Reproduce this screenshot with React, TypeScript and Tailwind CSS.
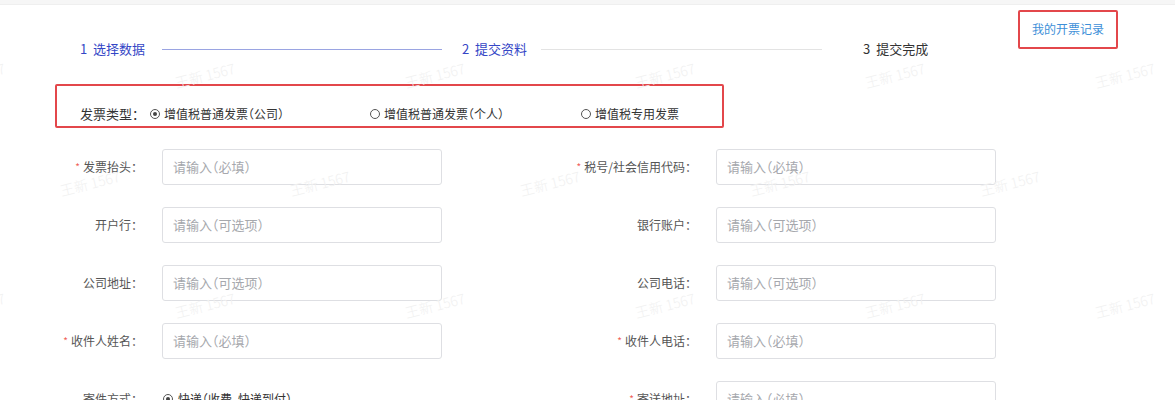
import React from "react";

const WM_A_X = [-25, 205, 435, 665, 895, 1125];
const WM_B_X = [90, 320, 550, 780, 1010];

function Watermarks() {
  const items: { x: number; y: number }[] = [];
  WM_A_X.forEach((x) => {
    items.push({ x, y: 75 });
    items.push({ x, y: 305 });
  });
  WM_B_X.forEach((x) => {
    items.push({ x, y: 183 });
  });
  return (
    <div className="pointer-events-none absolute inset-0 overflow-hidden">
      {items.map((p, i) => (
        <span
          key={i}
          className="absolute w-[70px] text-center text-[14px] font-light leading-[18px] text-[#f1f1f1] -rotate-[14deg] whitespace-nowrap"
          style={{ left: p.x - 35, top: p.y - 9 }}
        >
          王新 1567
        </span>
      ))}
    </div>
  );
}

function Radio({ checked }: { checked?: boolean }) {
  return (
    <span className="inline-flex h-[10px] w-[10px] items-center justify-center rounded-full border border-[#555] bg-white">
      {checked && <span className="h-[4px] w-[4px] rounded-full bg-[#444]" />}
    </span>
  );
}

function Label({ text, required }: { text: string; required?: boolean }) {
  return (
    <div className="flex w-[120px] shrink-0 items-center justify-end whitespace-nowrap text-[12px] leading-[18px] text-[#555]">
      {required && <span className="mr-[3px] text-[10px] text-[#f0605a]">*</span>}
      <span>{text}</span>
      <span className="inline-block w-[12px] text-left">：</span>
    </div>
  );
}

function Input({ placeholder }: { placeholder: string }) {
  return (
    <div className="ml-[19px] flex h-[36px] w-[280px] shrink-0 items-center rounded-[3px] border border-[#dedfe3] pl-[10px] text-[13px] text-[#a6a8ad] [font-feature-settings:'halt']">
      {placeholder}
    </div>
  );
}

function Field({ label, required, placeholder }: { label: string; required?: boolean; placeholder: string }) {
  return (
    <div className="flex w-[554px] shrink-0 items-center">
      <Label text={label} required={required} />
      <Input placeholder={placeholder} />
    </div>
  );
}

const REQ = "请输入（必填）";
const OPT = "请输入（可选项）";

export default function App() {
  return (
    <div className="relative h-[400px] w-[1175px] overflow-hidden bg-white font-['Noto_Sans_CJK_SC','Noto_Sans',sans-serif]">
      <div className="h-[5px] border-b border-[#efefef] bg-[#f6f6f6]" />

      {/* header */}
      <div className="flex items-start">
        <div className="flex items-center pl-[80px] pt-[35px] text-[13px] leading-[18px]">
          <span className="text-[#3446c6]">1&nbsp;&nbsp;选择数据</span>
          <span className="ml-[17px] h-px w-[280px] bg-[#9aa4e2]" />
          <span className="ml-[20px] text-[#3446c6]">2&nbsp;&nbsp;提交资料</span>
          <span className="ml-[14px] h-px w-[281px] bg-[#e3e3e3]" />
          <span className="ml-[41px] text-[#333]">3&nbsp;&nbsp;提交完成</span>
        </div>
        <div className="ml-auto mr-[57px] mt-[5px] flex h-[39px] w-[100px] items-start justify-center rounded-[2px] border-2 border-[#e3474b] pt-[9px] text-[12px] leading-[16px] text-[#3d8fd8]">
          我的开票记录
        </div>
      </div>

      {/* invoice type */}
      <div className="ml-[55px] mt-[26px] flex h-[44px] w-[669px] items-end rounded-[2px] border-2 border-[#e3474b] pb-[3px] pl-[23px] text-[12px] leading-[18px] text-[#333]">
        <span className="w-[70px] shrink-0 text-[13px]">发票类型：</span>
        <div className="flex w-[220px] shrink-0 items-center gap-[4px]">
          <Radio checked />
          <span className="[font-feature-settings:'halt']">增值税普通发票（公司）</span>
        </div>
        <div className="flex w-[211px] shrink-0 items-center gap-[4px]">
          <Radio />
          <span className="[font-feature-settings:'halt']">增值税普通发票（个人）</span>
        </div>
        <div className="flex items-center gap-[4px]">
          <Radio />
          <span>增值税专用发票</span>
        </div>
      </div>

      {/* form */}
      <div className="mt-[21px] flex flex-col gap-[22px] pl-[23px]">
        <div className="flex">
          <Field label="发票抬头" required placeholder={REQ} />
          <Field label="税号/社会信用代码" required placeholder={REQ} />
        </div>
        <div className="flex">
          <Field label="开户行" placeholder={OPT} />
          <Field label="银行账户" placeholder={OPT} />
        </div>
        <div className="flex">
          <Field label="公司地址" placeholder={OPT} />
          <Field label="公司电话" placeholder={OPT} />
        </div>
        <div className="flex">
          <Field label="收件人姓名" required placeholder={REQ} />
          <Field label="收件人电话" required placeholder={REQ} />
        </div>
        <div className="flex">
          <div className="flex w-[554px] shrink-0 items-center">
            <Label text="寄件方式" />
            <div className="ml-[20px] flex items-center gap-[5px] text-[12px] text-[#333] [font-feature-settings:'halt']">
              <Radio checked />
              <span>快递（收费，快递到付）</span>
            </div>
          </div>
          <Field label="寄送地址" required placeholder={REQ} />
        </div>
      </div>

      <Watermarks />
    </div>
  );
}
